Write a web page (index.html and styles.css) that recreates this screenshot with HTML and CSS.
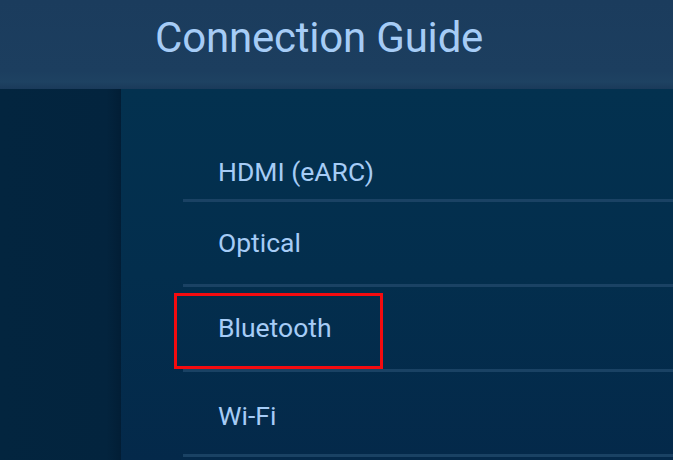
FILE: index.html
```html
<!DOCTYPE html>
<html lang="en">
<head>
<meta charset="utf-8">
<title>Connection Guide</title>
<link rel="stylesheet" href="styles.css">
</head>
<body>
<div class="screen">
  <header class="top">
    <h1 class="title">Connection Guide</h1>
  </header>
  <div class="body">
    <aside class="side"></aside>
    <main class="main">
      <ul class="list">
        <li class="item item-first">HDMI (eARC)</li>
        <li class="item">Optical</li>
        <li class="item item-marked">Bluetooth<span class="mark"></span></li>
        <li class="item item-last">Wi-Fi</li>
      </ul>
    </main>
  </div>
</div>
</body>
</html>
```

FILE: styles.css
```css
* { box-sizing: border-box; }
html, body { margin: 0; padding: 0; }
body {
  width: 673px;
  height: 460px;
  overflow: hidden;
  font-family: Roboto, "Open Sans", sans-serif;
  background: #03304e;
}
.screen {
  width: 673px;
  height: 460px;
  display: flex;
  flex-direction: column;
}
.top {
  height: 89px;
  flex: none;
  background: linear-gradient(to bottom, #1b3c5d 0%, #1c3e5f 80%, #1e4262 92%, #1a3a5a 100%);
  padding-left: 155px;
  display: flex;
  align-items: flex-start;
}
.title {
  margin: 0;
  padding-top: 10px;
  font-weight: 400;
  font-size: 42px;
  line-height: 56px;
  color: #a6ccf6;
  letter-spacing: -0.2px;
}
.body {
  flex: 1;
  display: flex;
  min-height: 0;
}
.side {
  width: 121px;
  flex: none;
  background: linear-gradient(to right, #03253f 0%, #03243e 88%, #021f37 98%, #021d35 100%);
}
.main {
  flex: 1;
  background: linear-gradient(to bottom, #03314f 0%, #032e4d 50%, #04294a 100%);
  padding-top: 40px;
  padding-left: 62px;
}
.list {
  list-style: none;
  margin: 0;
  padding: 0;
}
.item {
  position: relative;
  height: 85px;
  border-bottom: 3px solid #1a4264;
  display: flex;
  align-items: center;
  padding-left: 35px;
  padding-bottom: 1px;
  font-size: 26.5px;
  color: #a6ccf6;
}
.item-first {
  height: 73px;
  padding-top: 16px;
}
.item-last {
  padding-top: 5px;
}
.mark {
  position: absolute;
  left: -9px;
  top: 6px;
  width: 209px;
  height: 76px;
  border: 3px solid #f40b0f;
}
```
